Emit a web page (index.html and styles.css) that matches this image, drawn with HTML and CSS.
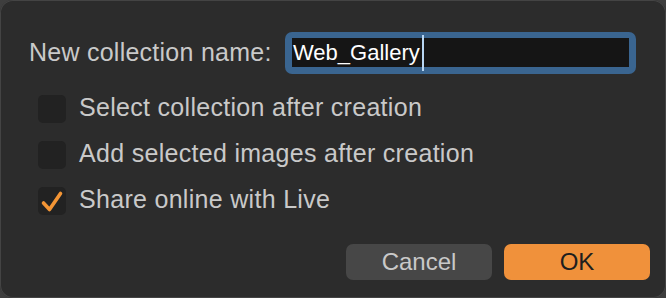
FILE: index.html
```html
<!DOCTYPE html>
<html lang="en">
<head>
    <meta charset="UTF-8">
    <title>New collection</title>
    <link rel="stylesheet" href="styles.css">
</head>
<body>
    <div class="dialog">
        <div class="name-row">
            <label class="name-label" for="collName">New collection name:</label>
            <div class="name-field">
                <div class="name-inner" id="collName">Web_Gallery<span class="caret"></span></div>
            </div>
        </div>

        <ul class="options">
            <li><span class="box"></span><span class="opt-text">Select collection after creation</span></li>
            <li><span class="box"></span><span class="opt-text">Add selected images after creation</span></li>
            <li>
                <span class="box">
                    <svg width="28" height="28" viewBox="0 0 28 28"><path d="M5.5 16 L11.5 22.5 L22.5 6.5" fill="none" stroke="#f39535" stroke-width="3.6" stroke-linecap="round" stroke-linejoin="round"/></svg>
                </span>
                <span class="opt-text">Share online with Live</span>
            </li>
        </ul>

        <div class="buttons">
            <button class="btn cancel">Cancel</button>
            <button class="btn ok">OK</button>
        </div>
    </div>
</body>
</html>
```

FILE: styles.css
```css
html, body{
    margin: 0;
    padding: 0;
    background: #3e3e3e;
}
.dialog{
    width: 666px;
    height: 298px;
    box-sizing: border-box;
    background: #2c2c2c;
    border-radius: 13px;
    box-shadow: inset 0 0 0 1px #444;
    padding: 32px 16px 0 29px;
    font-family: "Liberation Sans", Arial, sans-serif;
    color: #c9c9c9;
    display: flex;
    flex-direction: column;
}
.name-row{
    display: flex;
    align-items: center;
    height: 42px;
}
.name-label{
    font-size: 25px;
    letter-spacing: 0.25px;
    width: 256px;
    margin-top: -2px;
}
.name-field{
    width: 351px;
    height: 42px;
    box-sizing: border-box;
    padding: 6px 7px 7px 7px;
    background: #3a6590;
    border-radius: 7px;
}
.name-inner{
    height: 100%;
    background: #151515;
    color: #fff;
    font-size: 22px;
    line-height: 30px;
    padding-left: 1px;
    display: flex;
    align-items: center;
}
.caret{
    display: inline-block;
    width: 2px;
    height: 36px;
    margin-left: 2px;
    background: #b8d6f2;
}
.options{
    list-style: none;
    margin: 21px 0 0 9px;
    padding: 0;
    display: flex;
    flex-direction: column;
    gap: 18px;
}
.options li{
    display: flex;
    align-items: center;
    height: 28px;
}
.box{
    width: 28px;
    height: 28px;
    border-radius: 5px;
    background: #222;
    margin-right: 13px;
    display: flex;
}
.opt-text{
    font-size: 25px;
    letter-spacing: 0.3px;
    margin-top: -3px;
}
.buttons{
    display: flex;
    justify-content: flex-end;
    gap: 12px;
    margin-top: 29px;
}
.btn{
    width: 146px;
    height: 36px;
    border: none;
    border-radius: 7px;
    font-family: "Liberation Sans", Arial, sans-serif;
    font-size: 24px;
    padding: 0;
}
.cancel{
    background: #474747;
    color: #c9c9c9;
}
.ok{
    background: #f0913b;
    color: #1e1e1e;
}
```
